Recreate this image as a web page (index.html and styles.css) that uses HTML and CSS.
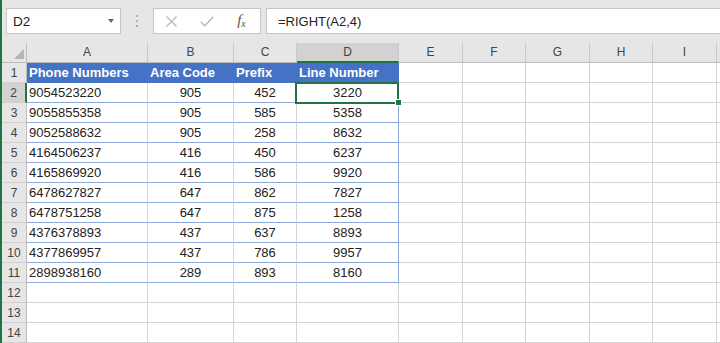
FILE: index.html
```html
<!DOCTYPE html>
<html>
<head>
<meta charset="utf-8">
<link rel="stylesheet" href="styles.css">
</head>
<body>
<div class="app">
  <div class="toolbar">
    <div class="namebox"><span class="nb-text">D2</span><span class="nb-arrow"></span></div>
    <div class="dots"><i></i><i></i><i></i></div>
    <div class="fxbox">
      <span class="fxslot"><svg width="11" height="11" viewBox="0 0 11 11"><path d="M0.5 0.5 L10.5 10.5 M10.5 0.5 L0.5 10.5" stroke="#b9b9b9" stroke-width="1.3" fill="none"/></svg></span>
      <span class="fxslot"><svg width="14" height="11" viewBox="0 0 14 11"><path d="M0.8 5.8 L4.8 9.8 L13.2 0.8" stroke="#b9b9b9" stroke-width="1.4" fill="none"/></svg></span>
      <span class="fxslot fx"><i>f<sub>x</sub></i></span>
    </div>
    <div class="formula">=RIGHT(A2,4)</div>
  </div>
  <div class="sheet">
    <div class="corner"><svg width="10" height="10" viewBox="0 0 10 10"><polygon points="10,0 10,10 0,10" fill="#b4b4b4"/></svg></div>
    <div class="ch">A</div><div class="ch">B</div><div class="ch">C</div><div class="ch selc">D</div><div class="ch">E</div><div class="ch">F</div><div class="ch">G</div><div class="ch">H</div><div class="ch">I</div><div class="ch"></div>

    <div class="rh">1</div><div class="c th">Phone Numbers</div><div class="c th">Area Code</div><div class="c th">Prefix</div><div class="c th">Line Number</div><div class="c"></div><div class="c"></div><div class="c"></div><div class="c"></div><div class="c"></div><div class="c"></div>

    <div class="rh selr">2</div><div class="c t">9054523220</div><div class="c t n">905</div><div class="c t n">452</div><div class="c t n te sel">3220<span class="selbox"></span><span class="handle"></span></div><div class="c"></div><div class="c"></div><div class="c"></div><div class="c"></div><div class="c"></div><div class="c"></div>

    <div class="rh">3</div><div class="c t">9055855358</div><div class="c t n">905</div><div class="c t n">585</div><div class="c t n te">5358</div><div class="c"></div><div class="c"></div><div class="c"></div><div class="c"></div><div class="c"></div><div class="c"></div>

    <div class="rh">4</div><div class="c t">9052588632</div><div class="c t n">905</div><div class="c t n">258</div><div class="c t n te">8632</div><div class="c"></div><div class="c"></div><div class="c"></div><div class="c"></div><div class="c"></div><div class="c"></div>

    <div class="rh">5</div><div class="c t">4164506237</div><div class="c t n">416</div><div class="c t n">450</div><div class="c t n te">6237</div><div class="c"></div><div class="c"></div><div class="c"></div><div class="c"></div><div class="c"></div><div class="c"></div>

    <div class="rh">6</div><div class="c t">4165869920</div><div class="c t n">416</div><div class="c t n">586</div><div class="c t n te">9920</div><div class="c"></div><div class="c"></div><div class="c"></div><div class="c"></div><div class="c"></div><div class="c"></div>

    <div class="rh">7</div><div class="c t">6478627827</div><div class="c t n">647</div><div class="c t n">862</div><div class="c t n te">7827</div><div class="c"></div><div class="c"></div><div class="c"></div><div class="c"></div><div class="c"></div><div class="c"></div>

    <div class="rh">8</div><div class="c t">6478751258</div><div class="c t n">647</div><div class="c t n">875</div><div class="c t n te">1258</div><div class="c"></div><div class="c"></div><div class="c"></div><div class="c"></div><div class="c"></div><div class="c"></div>

    <div class="rh">9</div><div class="c t">4376378893</div><div class="c t n">437</div><div class="c t n">637</div><div class="c t n te">8893</div><div class="c"></div><div class="c"></div><div class="c"></div><div class="c"></div><div class="c"></div><div class="c"></div>

    <div class="rh">10</div><div class="c t">4377869957</div><div class="c t n">437</div><div class="c t n">786</div><div class="c t n te">9957</div><div class="c"></div><div class="c"></div><div class="c"></div><div class="c"></div><div class="c"></div><div class="c"></div>

    <div class="rh">11</div><div class="c t">2898938160</div><div class="c t n">289</div><div class="c t n">893</div><div class="c t n te">8160</div><div class="c"></div><div class="c"></div><div class="c"></div><div class="c"></div><div class="c"></div><div class="c"></div>

    <div class="rh">12</div><div class="c"></div><div class="c"></div><div class="c"></div><div class="c"></div><div class="c"></div><div class="c"></div><div class="c"></div><div class="c"></div><div class="c"></div><div class="c"></div>

    <div class="rh">13</div><div class="c"></div><div class="c"></div><div class="c"></div><div class="c"></div><div class="c"></div><div class="c"></div><div class="c"></div><div class="c"></div><div class="c"></div><div class="c"></div>

    <div class="rh">14</div><div class="c"></div><div class="c"></div><div class="c"></div><div class="c"></div><div class="c"></div><div class="c"></div><div class="c"></div><div class="c"></div><div class="c"></div><div class="c"></div>
  </div>
</div>
</body>
</html>
```
FILE: styles.css
```css
html, body {
  margin: 0;
  padding: 0;
  background: #ffffff;
}
.app {
  width: 720px;
  height: 343px;
  box-sizing: border-box;
  border-left: 2px solid #217346;
  overflow: hidden;
  font-family: "Liberation Sans", Arial, sans-serif;
  color: #222222;
}
.toolbar {
  height: 43px;
  box-sizing: border-box;
  background: #e6e6e6;
  display: flex;
  align-items: flex-start;
  padding: 8px 0 0 4px;
}
.namebox {
  width: 115px;
  height: 26px;
  box-sizing: border-box;
  background: #fff;
  border: 1px solid #c6c6c6;
  display: flex;
  align-items: center;
  padding: 0 6px 0 6px;
  font-size: 13.5px;
  color: #222;
}
.nb-arrow {
  margin-left: auto;
  width: 0;
  height: 0;
  border-left: 3.5px solid transparent;
  border-right: 3.5px solid transparent;
  border-top: 4px solid #666;
}
.dots {
  margin-left: 15px;
  width: 2px;
  height: 26px;
  display: flex;
  flex-direction: column;
  justify-content: center;
  gap: 3px;
}
.dots i {
  display: block;
  width: 2px;
  height: 2px;
  background: #b0b0b0;
}
.fxbox {
  margin-left: 15px;
  width: 108px;
  height: 26px;
  box-sizing: border-box;
  background: #fff;
  border: 1px solid #c6c6c6;
  display: flex;
}
.fxslot {
  width: 35px;
  display: flex;
  align-items: center;
  justify-content: center;
}
.fx i {
  font-family: "Liberation Serif", "Times New Roman", serif;
  font-style: italic;
  font-size: 15px;
  color: #555;
  line-height: 1;
}
.fx sub {
  font-size: 10px;
  vertical-align: -2px;
}
.formula {
  margin-left: 5px;
  margin-right: -4px;
  flex: 1;
  height: 26px;
  box-sizing: border-box;
  background: #fff;
  border: 1px solid #c6c6c6;
  padding-left: 11px;
  display: flex;
  align-items: center;
  font-size: 13px;
  color: #222;
}
.sheet {
  display: grid;
  grid-template-columns: 25px 121px 86px 63px 102px 64px 63px 64px 63px 64px 1fr;
  grid-auto-rows: 20px;
}
.sheet > div {
  box-sizing: border-box;
  border-right: 1px solid #d4d4d4;
  border-bottom: 1px solid #d4d4d4;
  white-space: nowrap;
  overflow: visible;
}
.sheet > .corner {
  background: #e6e6e6;
  border-right: 1px solid #bdbdbd;
  border-bottom: 1px solid #bdbdbd;
  display: flex;
  align-items: flex-end;
  justify-content: flex-end;
  padding: 0 2px 3px 0;
}
.sheet > .ch {
  background: #e6e6e6;
  border-right: 1px solid #c8c8c8;
  border-bottom: 1px solid #bdbdbd;
  font-size: 12px;
  color: #444;
  text-align: center;
  line-height: 19px;
}
.sheet > .ch.selc {
  background: #d2d2d2;
  border-bottom: 2px solid #217346;
  line-height: 18px;
}
.sheet > .rh {
  background: #e6e6e6;
  border-right: 1px solid #bdbdbd;
  border-bottom: 1px solid #d0d0d0;
  font-size: 12px;
  color: #444;
  text-align: center;
  line-height: 20px;
}
.sheet > .rh.selr {
  background: #d2d2d2;
  border-right: 2px solid #217346;
}
.sheet > .c {
  font-size: 13px;
  padding: 1px 2px 0 2px;
  line-height: 18px;
}
.sheet > .th {
  background: #4472c4;
  color: #ffffff;
  font-weight: bold;
  border-right-color: #4472c4;
  border-bottom-color: #4472c4;
}
.sheet > .t {
  border-bottom-color: #8ea9db;
}
.sheet > .te {
  border-right-color: #8ea9db;
}
.sheet > .n {
  text-align: center;
}
.sheet > .sel {
  position: relative;
}
.selbox {
  position: absolute;
  left: -2px;
  top: -1px;
  width: 104px;
  height: 22px;
  box-sizing: border-box;
  border: 2px solid #217346;
}
.handle {
  position: absolute;
  left: 98px;
  top: 16px;
  width: 7px;
  height: 7px;
  box-sizing: border-box;
  background: #217346;
  border: 1px solid #ffffff;
}
```
